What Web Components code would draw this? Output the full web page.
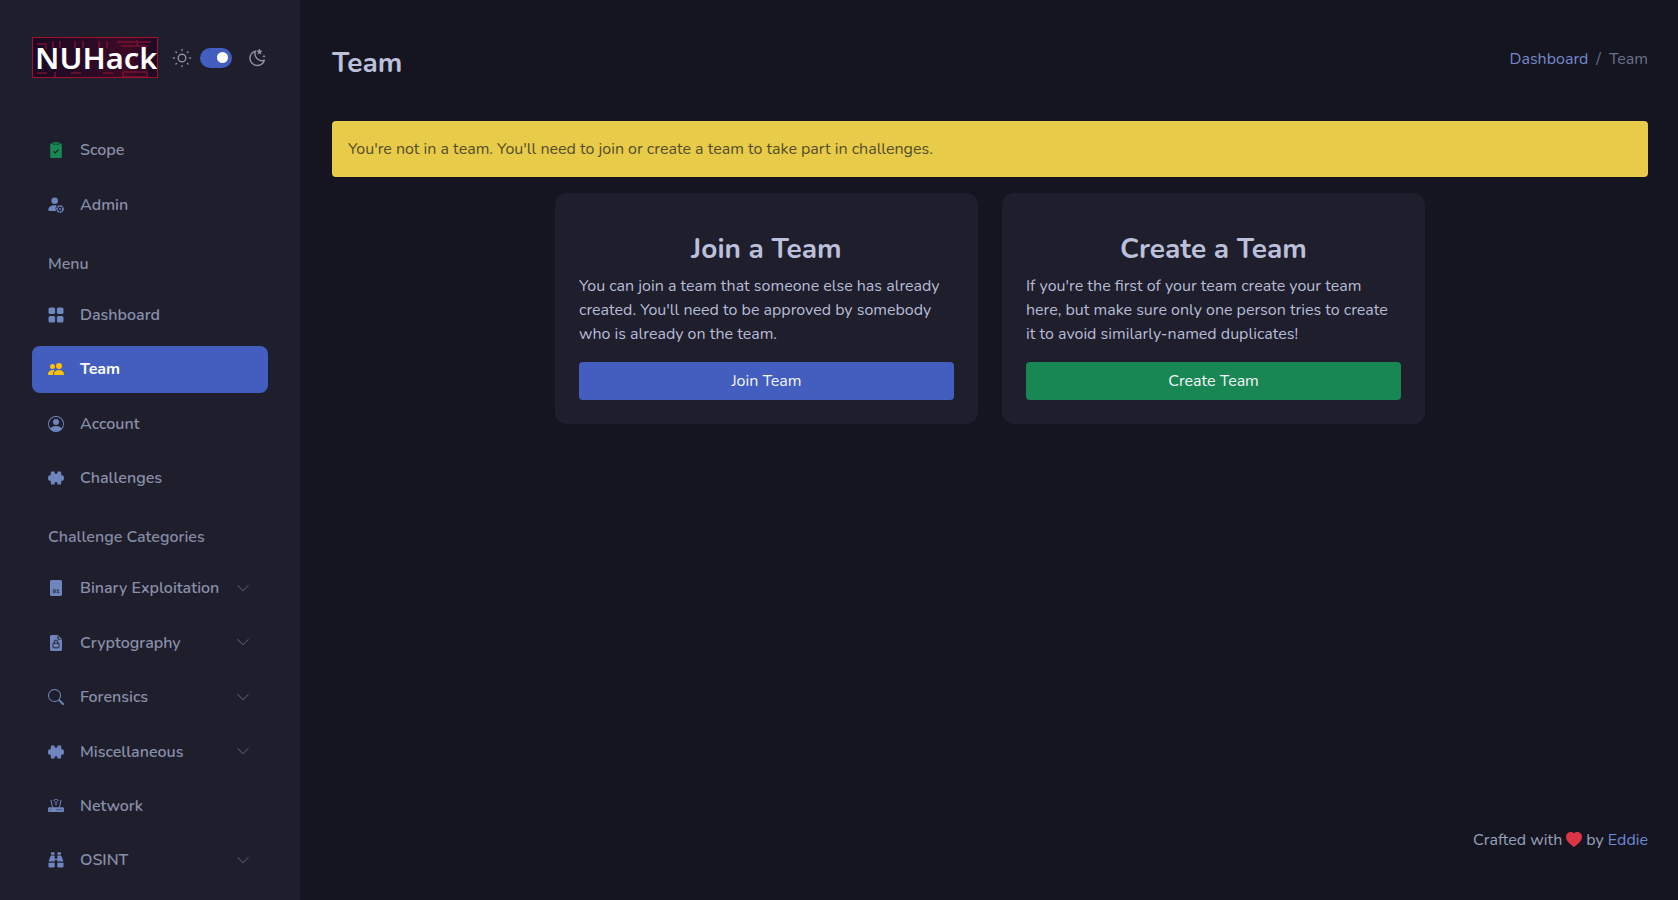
<!DOCTYPE html>
<html lang="en"><head><meta charset="utf-8"><title>Team</title>
<style>
html,body{margin:0;height:100%;background:#151521;}
body{font-family:Nunito,"Noto Sans","Liberation Sans",sans-serif;font-size:16px;color:#b7bbd4;overflow:hidden;}
</style></head><body>
<nu-app>
  <nu-sidebar slot="side">
    <nu-brand></nu-brand>
    <nu-item icon="scope" label="Scope"></nu-item>
    <nu-item icon="admin" label="Admin"></nu-item>
    <nu-heading style="height:55.8px;padding-top:16px">Menu</nu-heading>
    <nu-item icon="grid" label="Dashboard"></nu-item>
    <nu-item icon="people" label="Team" active></nu-item>
    <nu-item icon="account" label="Account"></nu-item>
    <nu-item icon="puzzle" label="Challenges"></nu-item>
    <nu-heading style="height:55.9px;padding-top:15px">Challenge Categories</nu-heading>
    <nu-item icon="binary" label="Binary Exploitation" chevron></nu-item>
    <nu-item icon="lockfile" label="Cryptography" chevron></nu-item>
    <nu-item icon="search" label="Forensics" chevron></nu-item>
    <nu-item icon="puzzle" label="Miscellaneous" chevron></nu-item>
    <nu-item icon="router" label="Network"></nu-item>
    <nu-item icon="binoculars" label="OSINT" chevron></nu-item>
  </nu-sidebar>
  <nu-pagehead title="Team"></nu-pagehead>
  <nu-alert>You're not in a team. You'll need to join or create a team to take part in challenges.</nu-alert>
  <nu-cards>
    <nu-card title="Join a Team" action="Join Team" tone="blue">You can join a team that someone else has already created. You'll need to be approved by somebody who is already on the team.</nu-card>
    <nu-card title="Create a Team" action="Create Team" tone="green">If you're the first of your team create your team here, but make sure only one person tries to create it to avoid similarly-named duplicates!</nu-card>
  </nu-cards>
  <nu-footer></nu-footer>
</nu-app>
<script>
const IC="#6f85bd";
const ICONS={
scope:`<svg viewBox="0 0 16 16" width="16" height="16"><path fill="#198754" d="M5 .3h6v1.200h1.900a.9.9 0 0 1 .9.9v12.700a.9.9 0 0 1-.9.9H3.100a.9.9 0 0 1-.9-.9V2.400a.9.9 0 0 1 .9-.9H5z"/><path fill="#0f5c3a" d="M5 1.500h6v1.500H5z"/><path fill="none" stroke="#12281f" stroke-width="1.200" d="M5.600 9.300l1.700 1.700 3.200-3.400"/></svg>`,
admin:`<svg viewBox="0 0 16 16" width="16" height="16"><circle cx="6.700" cy="3.800" r="3.300" fill="${IC}"/><path fill="${IC}" d="M0.300 13c0-3 2.700-4.800 6.300-4.800 1 0 1.600.1 2.200.3-.9 1-1.300 2.300-1.100 4.200l.4 1.300H1.800a1.500 1.500 0 0 1-1.500-1.800z"/><circle cx="12" cy="12" r="3" fill="none" stroke="${IC}" stroke-width="1.700" stroke-dasharray="2.200 .6"/><circle cx="12" cy="12" r=".9" fill="${IC}"/></svg>`,
grid:`<svg viewBox="0 0 16 16" width="16" height="16" fill="${IC}"><rect x=".5" y=".5" width="6.600" height="6.600" rx="1.500"/><rect x="8.900" y=".5" width="6.600" height="6.600" rx="1.500"/><rect x=".5" y="8.900" width="6.600" height="6.600" rx="1.500"/><rect x="8.900" y="8.900" width="6.600" height="6.600" rx="1.500"/></svg>`,
people:`<svg viewBox="0 0 16 16" width="16" height="16" fill="#ffc107"><path d="M7 14s-1 0-1-1 1-4 5-4 5 3 5 4-1 1-1 1H7Zm4-6a3 3 0 1 0 0-6 3 3 0 0 0 0 6Zm-5.784 6A2.238 2.238 0 0 1 5 13c0-1.355.68-2.750 1.936-3.720A6.325 6.325 0 0 0 5 9c-4 0-5 3-5 4s1 1 1 1h4.216ZM4.500 8a2.500 2.500 0 1 0 0-5 2.500 2.500 0 0 0 0 5Z"/></svg>`,
account:`<svg viewBox="0 0 16 16" width="16" height="16" fill="${IC}"><path d="M11 6a3 3 0 1 1-6 0 3 3 0 0 1 6 0z"/><path fill-rule="evenodd" d="M0 8a8 8 0 1 1 16 0A8 8 0 0 1 0 8zm8-7a7 7 0 0 0-5.468 11.370C3.242 11.226 4.805 10 8 10s4.757 1.225 5.468 2.370A7 7 0 0 0 8 1z"/></svg>`,
puzzle:`<svg viewBox="0 0 16 16" width="16" height="16" fill="${IC}"><path d="M3.800 1.500H6c.6 0 .7.500.6 1-.2.900.4 1.300 1.400 1.300s1.600-.4 1.400-1.300c-.1-.5 0-1 .6-1h2.200c.6 0 1 .4 1 1v2.300c0 .4.300.5.7.4.9-.3 2.100.3 2.100 2.800s-1.200 3.100-2.100 2.800c-.4-.1-.7 0-.7.4v2.300c0 .6-.4 1-1 1H10c-.6 0-.7-.5-.6-1 .2-.9-.4-1.300-1.400-1.300s-1.600.4-1.400 1.300c.1.5 0 1-.6 1H3.800c-.6 0-1-.4-1-1v-2.300c0-.4-.3-.5-.7-.4C1.200 11.100 0 10.500 0 8s1.200-3.100 2.100-2.800c.4.100.7 0 .7-.4V2.500c0-.6.400-1 1-1z"/></svg>`,
binary:`<svg viewBox="0 0 16 16" width="16" height="16"><path fill="${IC}" d="M3.500 0h9A1.500 1.500 0 0 1 14 1.500v13a1.500 1.500 0 0 1-1.500 1.500h-9A1.500 1.500 0 0 1 2 14.500v-13A1.500 1.500 0 0 1 3.500 0z"/><text x="8" y="13" text-anchor="middle" font-family="Liberation Mono,monospace" font-weight="700" font-size="6" fill="#23253a">01</text></svg>`,
lockfile:`<svg viewBox="0 0 16 16" width="16" height="16"><path fill="${IC}" d="M3.500 0h6.300L14 4.200v10.300a1.500 1.500 0 0 1-1.500 1.500h-9A1.500 1.500 0 0 1 2 14.500v-13A1.500 1.500 0 0 1 3.500 0z"/><path fill="#1e1e2d" d="M9.300.4l.2 3.400a.8.800 0 0 0 .8.800l3.400.2-.9-.9-2.100-.1-.1-2.100z"/><path fill="none" stroke="#1e1e2d" stroke-width="1" d="M6.300 8.200V6.800a1.700 1.700 0 0 1 3.400 0v1.400"/><rect x="5" y="8.200" width="6" height="4.600" rx=".7" fill="none" stroke="#1e1e2d" stroke-width="1"/></svg>`,
search:`<svg viewBox="0 0 16 16" width="16" height="16" fill="${IC}"><path d="M11.742 10.344a6.500 6.500 0 1 0-1.397 1.398h-.001c.03.04.062.078.098.115l3.850 3.850a1 1 0 0 0 1.415-1.414l-3.850-3.850a1.007 1.007 0 0 0-.115-.1zM12 6.500a5.500 5.500 0 1 1-11 0 5.500 5.500 0 0 1 11 0z"/></svg>`,
router:`<svg viewBox="0 0 16 16" width="16" height="16"><path fill="${IC}" d="M1.400 9.300h13.200c.8 0 1.400.6 1.400 1.400v2c0 .8-.6 1.400-1.400 1.400H1.400C.6 14.100 0 13.500 0 12.700v-2c0-.8.6-1.400 1.400-1.400z"/><g fill="#1e1e2d"><circle cx="8.800" cy="11.800" r=".5"/><circle cx="10.500" cy="11.800" r=".5"/><circle cx="12.200" cy="11.800" r=".5"/><circle cx="13.900" cy="11.800" r=".5"/><circle cx="2.200" cy="11.800" r=".5"/></g><g fill="none" stroke="${IC}" stroke-width="1" stroke-linecap="round"><path d="M3 2.300l1.500 7M13 2.300l-1.500 7"/><path d="M5.600 2.300a3.700 3.700 0 0 1 4.800 0M6.700 4.300a2 2 0 0 1 2.600 0"/></g><circle cx="8" cy="6.300" r=".9" fill="${IC}"/></svg>`,
binoculars:`<svg viewBox="0 0 16 16" width="16" height="16" fill="${IC}"><rect x="3" y=".3" width="3.600" height="2.400" rx=".6"/><rect x="9.400" y=".3" width="3.600" height="2.400" rx=".6"/><path d="M2.800 3.600h3.900v3.200h2.600V3.600h3.900l2.300 6H9.300V8.100H6.700v1.500H.5z"/><path d="M.5 10.800h6.200v3.700c0 .6-.4 1-1 1h-4.200c-.6 0-1-.4-1-1zM9.300 10.800h6.200v3.700c0 .6-.4 1-1 1h-4.200c-.6 0-1-.4-1-1z"/></svg>`,
chev:`<svg viewBox="0 0 16 16" width="14" height="14" fill="#676a7f"><path d="M1.800 4.800a.35.35 0 0 1 .5 0L8 10.500l5.700-5.700a.35.35 0 0 1 .5.5l-6 6a.35.35 0 0 1-.5 0l-6-6a.35.35 0 0 1 0-.5z"/></svg>`
};
function def(name,css,html){
  customElements.define(name,class extends HTMLElement{
    constructor(){super();this.attachShadow({mode:"open"});}
    connectedCallback(){
      this.shadowRoot.innerHTML=`<style>${css}</style>`+(typeof html==="function"?html(this):html);
    }
  });
}
def("nu-app",`:host{display:grid;grid-template-columns:300px 1fr;height:900px;overflow:hidden;background:#151521}
 .main{display:flex;flex-direction:column;padding:0 30px 30px 32px;min-width:0;height:900px;box-sizing:border-box}`,
 `<slot name="side"></slot><div class="main"><slot></slot></div>`);
def("nu-sidebar",`:host{display:block;background:#1e1e2d;height:900px;overflow:hidden;padding:0 32px;box-sizing:border-box}`,`<slot></slot>`);
def("nu-brand",`:host{display:flex;align-items:center;height:119.200px;box-sizing:border-box;padding-bottom:4.400px}
 .logo{width:126px;height:41px;box-sizing:border-box;border:1px solid #a3102e;position:relative;overflow:hidden;background:linear-gradient(90deg,#1c0a22,#2a0a26 45%,#3c0a24 75%,#1c0a24);flex:none}
 .logo svg{position:absolute;inset:0}
 .logo span{position:absolute;left:2px;top:5.500px;font:600 28px/31px "Noto Sans",sans-serif;color:#fff;letter-spacing:0;white-space:nowrap;transform:scaleX(1.1);transform-origin:left}
 .t{display:flex;align-items:center;margin-left:14px;margin-top:1px}
 .sw{width:32px;height:20px;background:#435ebe;border-radius:10px;position:relative;margin-left:8px}
 .sw i{position:absolute;width:11px;height:11px;border-radius:50%;background:#fff;left:16.500px;top:4.500px}
 .moon{margin-left:15px}`,
 `<div class="logo"><svg width="124" height="39" viewBox="0 0 124 39" fill="none" stroke="#7a1030" stroke-width="1.500"><path d="M4 6h9v5M20 3v7M27 3v7M42 3v7M50 3v7M66 3v7M74 3v7M88 8h26M84 4h34M4 35h10M22 34v5M38 35h10M70 35h10M90 34h24v5H90zM104 2v6"/></svg><span>NUHack</span></div>
 <div class="t">
 <svg width="20" height="20" viewBox="0 0 21 21" fill="none" stroke="#8b8e9f" stroke-width="1.500" stroke-linecap="round"><g transform="translate(10.500 10.500)"><circle r="4"/><path d="M0-8v-1M0 8v1M8 0h1M-8 0h-1M5.700-5.700l.7-.7M-5.700 5.700l-.7.7M5.700 5.700l.7.7M-5.700-5.700l-.7-.7"/></g></svg>
 <div class="sw"><i></i></div>
 <svg class="moon" width="20" height="20" viewBox="0 0 20 20" fill="none"><path d="M8.400 3.100a7.300 7.300 0 1 0 8.900 9.100 7 7 0 0 1-8.900-9.100z" stroke="#8b8e9f" stroke-width="1.500" stroke-linejoin="round"/><path fill="#8b8e9f" d="M12.500.5l.9 2 2.100.3-1.500 1.500.4 2.200-1.900-1-1.900 1 .4-2.200L9 2.800l2.100-.3zM17 6.500l.5 1.300 1.400.5-1.400.5L17 10.100l-.5-1.300-1.400-.5 1.400-.5z"/></svg>
 </div>`);
def("nu-item",`:host{display:block;margin-top:8px}
 .r{display:flex;align-items:center;height:46.400px;padding:0 16px;box-sizing:border-box;border-radius:8px;color:#8a8fa8;font-weight:600;font-size:16px}
 .r.a{background:#435ebe;color:#fff;font-weight:700}
 .i{width:16px;height:16px;display:flex;flex:none;margin-right:16px}
 .l{flex:1}
 .c{display:flex;margin-right:2px;margin-top:-1px}`,
 el=>`<div class="r ${el.hasAttribute("active")?"a":""}"><span class="i">${ICONS[el.getAttribute("icon")]}</span><span class="l">${el.getAttribute("label")}</span>${el.hasAttribute("chevron")?`<span class="c">${ICONS.chev}</span>`:""}</div>`);
def("nu-heading",`:host{display:flex;align-items:center;padding:0 16px;box-sizing:border-box;color:#878ba4;font-weight:600;font-size:16px}`,`<slot></slot>`);
def("nu-pagehead",`:host{display:flex;justify-content:space-between;align-items:flex-start;height:121px;padding-top:40px;box-sizing:border-box}
 h1{margin:.500px 0 0;font-size:28px;line-height:44px;font-weight:700;color:#bcc0da}
 nav{line-height:38px;font-size:16px;color:#6c7088}
 a{color:#7488c8;text-decoration:none} .s{margin:0 8px;color:#6c7088}`,
 el=>`<h1>${el.getAttribute("title")}</h1><nav><a>Dashboard</a><span class="s">/</span>${el.getAttribute("title")}</nav>`);
def("nu-alert",`:host{display:flex;align-items:center;height:56px;padding:0 16px;box-sizing:border-box;background:#e8cb49;color:#544e2a;border-radius:4px;margin-bottom:16px;font-size:16px;font-weight:400}`,`<slot></slot>`);
def("nu-cards",`:host{display:grid;grid-template-columns:423px 423px;gap:24px;justify-content:center}`,`<slot></slot>`);
def("nu-card",`:host{display:block;background:#1e1e2d;border-radius:12px;padding:24px;height:231px;box-sizing:border-box}
 h2{margin:14px 0 7px;font-size:28px;line-height:36px;font-weight:700;text-align:center;color:#bcc0da}
 p{margin:0 0 16px;padding-right:2px;font-size:16px;line-height:24px;color:#b7bbd4;height:72px}
 button{display:block;width:100%;height:38px;border:0;border-radius:4px;color:#f4f5fb;font-family:inherit;font-size:16px;font-weight:400;line-height:24px;padding:0}
 .blue{background:#435ebe}.green{background:#198754}`,
 el=>`<h2>${el.getAttribute("title")}</h2><p><slot></slot></p><button class="${el.getAttribute("tone")}">${el.getAttribute("action")}</button>`);
def("nu-footer",`:host{display:flex;justify-content:flex-end;align-items:center;margin-top:auto;height:60px;color:#98a1bb;font-size:16px;white-space:pre}
 a{color:#6f88d2} svg{margin:0 4px;display:block}`,
 `Crafted with<svg width="16" height="16" viewBox="0 0 16 16" fill="#dc3545"><path d="M8 1.314C12.438-3.248 23.534 4.735 8 15-7.534 4.736 3.562-3.248 8 1.314z"/></svg>by <a>Eddie</a>`);
</script>
</body></html>
